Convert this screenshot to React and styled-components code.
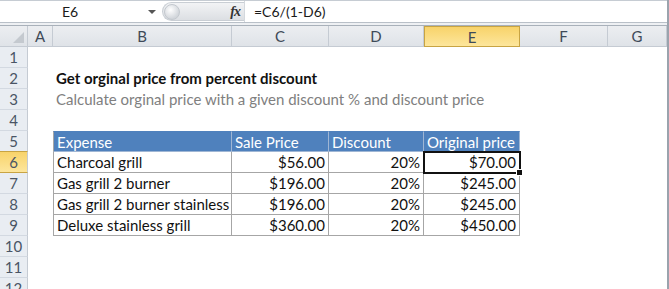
import React from 'react';
import styled, { createGlobalStyle, css } from 'styled-components';

const GlobalStyle = createGlobalStyle`
  html, body {
    margin: 0;
    padding: 0;
    background: #ffffff;
    overflow: hidden;
  }
  body {
    font-family: Lato, "Open Sans", sans-serif;
  }
`;

const columns = ['A', 'B', 'C', 'D', 'E', 'F', 'G'];
// row header + A..G
const colWidths = '28px 25px 179px 97px 95px 96px 88px 1fr';

const tableRows = [
  ['Charcoal grill', '$56.00', '20%', '$70.00'],
  ['Gas grill 2 burner', '$196.00', '20%', '$245.00'],
  ['Gas grill 2 burner stainless', '$196.00', '20%', '$245.00'],
  ['Deluxe stainless grill', '$360.00', '20%', '$450.00'],
];
const tableHead = ['Expense', 'Sale Price', 'Discount', 'Original price'];

const Window = styled.div`
  width: 667px;
  height: 289px;
  border-right: 2px solid #9aa3ad;
  overflow: hidden;
  background: #fff;
`;

const FormulaBar = styled.div`
  display: flex;
  align-items: center;
  height: 21px;
  border-top: 1px solid #c6ccd3;
  border-bottom: 1px solid #b9c0c8;
  background: #fff;
`;

const NameBox = styled.div`
  width: 140px;
  text-align: center;
  font-size: 14px;
  color: #1a1a1a;
  padding-right: 4px;
`;

const DropArrow = styled.div`
  width: 0;
  height: 0;
  margin-left: 4px;
  border-left: 4px solid transparent;
  border-right: 4px solid transparent;
  border-top: 4px solid #555;
`;

const Grip = styled.div`
  display: flex;
  align-items: center;
  justify-content: space-between;
  margin-left: 6px;
  width: 82px;
  height: 19px;
  border-radius: 10px 0 0 10px;
  background: linear-gradient(#f2f3f5, #dcdfe3);
  border: 1px solid #c9ced4;
  border-right: none;
  box-sizing: border-box;
`;

const GripKnob = styled.div`
  width: 14px;
  height: 14px;
  margin-left: 1px;
  border-radius: 50%;
  background: radial-gradient(circle at 40% 35%, #ffffff, #d2d6db 70%);
  border: 1px solid #c3c8ce;
`;

const Fx = styled.span`
  font-family: "Liberation Serif", serif;
  font-style: italic;
  font-weight: bold;
  font-size: 14px;
  color: #333;
  margin-right: 4px;
  letter-spacing: -1px;
`;

const Formula = styled.div`
  flex: 1;
  height: 21px;
  line-height: 21px;
  padding-left: 9px;
  border-left: 1px solid #d4d8dd;
  font-size: 14px;
  color: #1a1a1a;
`;

const Spacer = styled.div`
  height: 2px;
  background: #eef0f3;
  border-bottom: 1px solid #a9b1ba;
`;

const Sheet = styled.div`
  display: grid;
  grid-template-columns: ${colWidths};
  grid-auto-rows: 21px;
`;

const headerCell = css`
  box-sizing: border-box;
  display: flex;
  align-items: center;
  justify-content: center;
  font-size: 14px;
  color: #3f4a58;
  border-right: 1px solid #c5cbd3;
  border-bottom: 1px solid #c5cbd3;
`;

const ColHead = styled.div`
  ${headerCell};
  background: ${p =>
    p.$active
      ? 'linear-gradient(#f8d36a, #fde69c)'
      : 'linear-gradient(#eceef1, #dfe3e8)'};
  ${p => p.$active && 'border: 1px solid #c8a443;'}
  font-size: 15px;
`;

const Corner = styled.div`
  ${headerCell};
  position: relative;
  background: linear-gradient(#eceef1, #dfe3e8);
  &::after {
    content: '';
    position: absolute;
    right: 3px;
    bottom: 3px;
    border-left: 11px solid transparent;
    border-bottom: 11px solid #c4c9cf;
  }
`;

const RowHead = styled.div`
  ${headerCell};
  background: ${p => (p.$active ? 'linear-gradient(#f8d36a, #fde69c)' : '#e9edf2')};
  border-bottom-color: ${p => (p.$active ? '#c8a443' : '#d3d9e1')};
  ${p => p.$active && 'border-top: 1px solid #c8a443; margin-top: -1px; height: 22px;'}
  color: #4a5565;
  font-size: 15px;
`;

const Cell = styled.div`
  box-sizing: border-box;
  position: relative;
  font-size: 15px;
  line-height: 20px;
  padding: 0 3px;
  white-space: nowrap;
  color: #111;
  text-align: ${p => (p.$right ? 'right' : 'left')};
  ${p => p.$table && 'border-right: 1px solid #a6a6a6; border-bottom: 1px solid #a6a6a6;'}
  ${p => p.$first && 'border-left: 1px solid #a6a6a6;'}
  ${p => p.$head && 'background: #4f81bd; color: #ffffff; border-right-color: #9fb6d4; border-bottom-color: #9fb6d4; border-top: 1px solid #4f81bd;'}
  ${p => p.$selected && 'outline: 2px solid #111; outline-offset: -1px; z-index: 1;'}
`;

const Title = styled.span`
  font-weight: bold;
  color: #111;
`;

const Subtitle = styled.span`
  color: #808080;
`;

const FillHandle = styled.div`
  position: absolute;
  right: -4px;
  bottom: -4px;
  width: 5px;
  height: 5px;
  background: #111;
  border: 1px solid #fff;
  z-index: 2;
`;

const cellFor = (row, colIdx) => {
  const col = columns[colIdx];
  if (row === 2 && col === 'B') return <Cell><Title>Get orginal price from percent discount</Title></Cell>;
  if (row === 3 && col === 'B')
    return <Cell><Subtitle>Calculate orginal price with a given discount % and discount price</Subtitle></Cell>;
  const t = colIdx - 1;
  if (row >= 5 && row <= 9 && t >= 0 && t <= 3) {
    if (row === 5) {
      return <Cell $table $head $first={t === 0}>{tableHead[t]}</Cell>;
    }
    const selected = row === 6 && t === 3;
    return (
      <Cell $table $first={t === 0} $right={t > 0} $selected={selected}>
        {tableRows[row - 6][t]}
        {selected && <FillHandle />}
      </Cell>
    );
  }
  return <Cell />;
};

const App = () => {
  const rows = Array.from({ length: 12 }, (_, i) => i + 1);
  return (
    <Window>
      <GlobalStyle />
      <FormulaBar>
        <NameBox>E6</NameBox>
        <DropArrow />
        <Grip>
          <GripKnob />
          <Fx>fx</Fx>
        </Grip>
        <Formula>=C6/(1-D6)</Formula>
      </FormulaBar>
      <Spacer />
      <Sheet>
        <Corner />
        {columns.map(c => (
          <ColHead key={c} $active={c === 'E'}>{c}</ColHead>
        ))}
        {rows.map(r => (
          <React.Fragment key={r}>
            <RowHead $active={r === 6}>{r}</RowHead>
            {columns.map((c, i) => (
              <React.Fragment key={c}>{cellFor(r, i)}</React.Fragment>
            ))}
          </React.Fragment>
        ))}
      </Sheet>
    </Window>
  );
};

export default App;
